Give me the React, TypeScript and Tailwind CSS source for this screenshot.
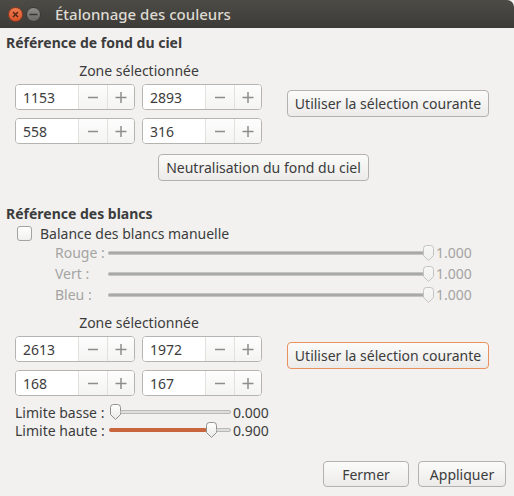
import React from "react";

function Minus() {
  return (
    <svg width="12" height="12" viewBox="0 0 12 12">
      <path d="M1 6.5 H11" stroke="#8d8d8b" strokeWidth="1.5" />
    </svg>
  );
}
function Plus() {
  return (
    <svg width="12" height="12" viewBox="0 0 12 12">
      <path d="M0.5 6.5 H11.5 M6 1 V12" stroke="#8d8d8b" strokeWidth="1.5" />
    </svg>
  );
}

function Spin({ v }: { v: string }) {
  return (
    <div className="flex h-[26px] w-[120px] rounded-[4px] border border-[#b5b4b0] bg-white overflow-hidden">
      <div className="flex items-center w-[62px] pl-[7px] bg-white">{v}</div>
      <div className="flex items-center justify-center w-[29px] border-l border-[#e2e1de] bg-gradient-to-b from-[#fdfdfd] to-[#f4f4f3]">
        <Minus />
      </div>
      <div className="flex items-center justify-center flex-1 border-l border-[#e2e1de] bg-gradient-to-b from-[#fdfdfd] to-[#f4f4f3]">
        <Plus />
      </div>
    </div>
  );
}

function Btn({ children, w, h, focus }: { children: React.ReactNode; w: string; h: string; focus?: boolean }) {
  return (
    <div
      className={
        "flex items-center justify-center rounded-[4px] border bg-gradient-to-b from-[#fbfbfa] to-[#ecebe9] " +
        w +
        " " +
        h +
        " " +
        (focus ? "border-[#e9925f]" : "border-[#b3b2ae]")
      }
    >
      {children}
    </div>
  );
}

function Handle({ disabled }: { disabled?: boolean }) {
  return (
    <svg width="13" height="18" viewBox="0 0 13 18" className="shrink-0">
      <defs>
        <linearGradient id={disabled ? "hd" : "he"} x1="0" y1="0" x2="0" y2="1">
          <stop offset="0" stopColor={disabled ? "#f7f7f6" : "#ffffff"} />
          <stop offset="1" stopColor={disabled ? "#efefee" : "#e9e9e7"} />
        </linearGradient>
      </defs>
      <path
        d="M1.5 4.5 Q1.5 1.5 4.5 1.5 H8.5 Q11.5 1.5 11.5 4.5 V11.5 L6.5 16.5 L1.5 11.5 Z"
        fill={disabled ? "url(#hd)" : "url(#he)"}
        stroke={disabled ? "#c3c3c1" : "#8f8f8d"}
        strokeWidth="1"
      />
    </svg>
  );
}

function Zone({ a, b, c, d, focus }: { a: string; b: string; c: string; d: string; focus?: boolean }) {
  return (
    <div className="flex pl-[9px]">
      <div className="flex flex-col w-[248px]">
        <div className="h-[17px] leading-[17px] text-center">Zone sélectionnée</div>
        <div className="grid grid-cols-[120px_120px] gap-x-[7px] gap-y-[8px] mt-[5px]">
          <Spin v={a} />
          <Spin v={b} />
          <Spin v={c} />
          <Spin v={d} />
        </div>
      </div>
      <div className="ml-[24px] mt-[28px]">
        <Btn w="w-[202px]" h="h-[27px]" focus={focus}>
          Utiliser la sélection courante
        </Btn>
      </div>
    </div>
  );
}

function DisabledSlider({ label }: { label: string }) {
  return (
    <div className="flex items-center h-[21px] pl-[49px] text-[#a4a4a2]">
      <div className="w-[53px]">{label}</div>
      <div className="flex items-center w-[327px]">
        <div className="flex-1 h-[4px] rounded-[2px] bg-[#a9a9a7] border-y border-[#c4c4c2] -mr-[3px]" />
        <Handle disabled />
      </div>
      <div className="ml-[1px]">1.000</div>
    </div>
  );
}

export default function App() {
  return (
    <div className="w-[514px] h-[496px] bg-[#f2f1f0] text-[#3c3c3c] font-['Noto_Sans',sans-serif] text-[14px] flex flex-col overflow-hidden">
      <div className="h-[28px] shrink-0 flex items-center bg-gradient-to-b from-[#4d4b46] to-[#3c3b37] rounded-tr-[7px]">
        <div className="ml-[8px] w-[15px] h-[15px] rounded-full bg-gradient-to-b from-[#f07b4d] to-[#d9532a] border border-[#8d3a1e] flex items-center justify-center">
          <svg width="7" height="7" viewBox="0 0 7 7">
            <path d="M1 1 L6 6 M6 1 L1 6" stroke="#4a2416" strokeWidth="1.3" />
          </svg>
        </div>
        <div className="ml-[3px] w-[15px] h-[15px] rounded-full bg-gradient-to-b from-[#8f8d88] to-[#6b6965] border border-[#3a3935] flex items-center justify-center">
          <svg width="9" height="5" viewBox="0 0 9 5">
            <path d="M0.5 2.5 H8.5" stroke="#3a3935" strokeWidth="1.5" />
          </svg>
        </div>
        <div className="ml-[14px] text-[#dfdbd2] text-[15px] font-medium">Étalonnage des couleurs</div>
      </div>

      <div className="flex flex-col flex-1 px-[6px]">
        <div className="h-[17px] leading-[17px] mt-[6px] font-bold">Référence de fond du ciel</div>
        <div className="mt-[11px]">
          <Zone a="1153" b="2893" c="558" d="316" />
        </div>
        <div className="mt-[10px] ml-[152px]">
          <Btn w="w-[211px]" h="h-[27px]">Neutralisation du fond du ciel</Btn>
        </div>

        <div className="h-[17px] leading-[17px] mt-[24px] font-bold">Référence des blancs</div>
        <div className="flex items-center h-[17px] mt-[3px] pl-[11px]">
          <div className="w-[15px] h-[15px] rounded-[3px] border border-[#a3a3a0] bg-gradient-to-b from-[#ffffff] to-[#f0f0ef]" />
          <div className="ml-[8px]">Balance des blancs manuelle</div>
        </div>
        <DisabledSlider label="Rouge :" />
        <DisabledSlider label="Vert :" />
        <DisabledSlider label="Bleu :" />

        <div className="mt-[9px]">
          <Zone a="2613" b="1972" c="168" d="167" focus />
        </div>

        <div className="flex flex-col mt-[7px] pl-[9px]">
          <div className="flex items-center h-[18px]">
            <div className="w-[94px]">Limite basse :</div>
            <div className="flex items-center w-[122px]">
              <Handle />
              <div className="flex-1 h-[4px] -ml-[2px] rounded-[2px] bg-[#dededc] border border-[#b9b9b7]" />
            </div>
            <div className="ml-[2px]">0.000</div>
          </div>
          <div className="flex items-center h-[18px]">
            <div className="w-[94px]">Limite haute :</div>
            <div className="flex items-center w-[122px]">
              <div className="w-[98px] h-[4px] rounded-[2px] bg-[#c8653d] -mr-[2px]" />
              <Handle />
              <div className="flex-1 h-[4px] -ml-[2px] rounded-[2px] bg-[#dededc] border border-[#b9b9b7]" />
            </div>
            <div className="ml-[2px]">0.900</div>
          </div>
        </div>

        <div className="mt-auto mb-[9px] flex justify-end gap-[9px] pr-[2px]">
          <Btn w="w-[86px]" h="h-[26px]">Fermer</Btn>
          <Btn w="w-[88px]" h="h-[26px]">Appliquer</Btn>
        </div>
      </div>
    </div>
  );
}
